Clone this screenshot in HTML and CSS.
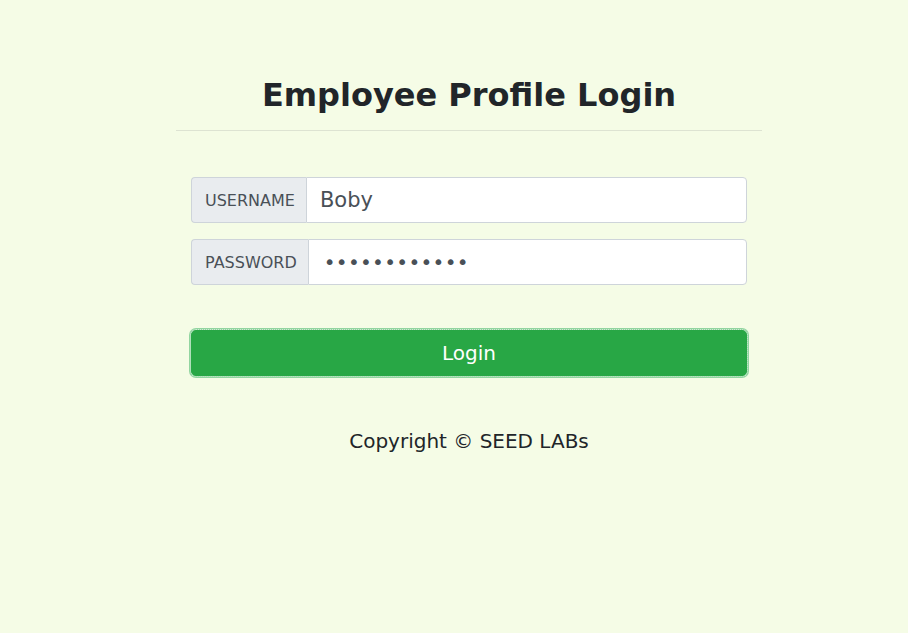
FILE: index.html
```html
<!DOCTYPE html>
<html lang="en">
<head>
<meta charset="utf-8">
<title>Employee Profile Login</title>
<link rel="stylesheet" href="styles.css">
</head>
<body>
<div class="page">
  <div class="container">
    <h2 class="title">Employee Profile Login</h2>
    <hr class="rule">
    <form class="login-form">
      <div class="input-group">
        <span class="group-label">USERNAME</span>
        <input class="group-input" type="text" value="Boby">
      </div>
      <div class="input-group">
        <span class="group-label">PASSWORD</span>
        <input class="group-input password" type="password" value="seedbobyabcd">
      </div>
      <button class="login-btn" type="button">Login</button>
    </form>
    <p class="copyright">Copyright © SEED LABs</p>
  </div>
</div>
</body>
</html>
```
FILE: styles.css
```css
html, body {
  margin: 0;
  padding: 0;
  background: #f5fce6;
  font-family: "DejaVu Sans", "Liberation Sans", sans-serif;
  color: #212529;
}
.page {
  padding-left: 30px;
  padding-top: 73px;
}
.container {
  width: 586px;
  margin: 0 auto;
}
.title {
  margin: 0;
  text-align: center;
  font-size: 32px;
  font-weight: bold;
  line-height: 44px;
  color: #212529;
}
.rule {
  margin: 13px 0 0 0;
  border: 0;
  border-top: 1px solid #dde3d2;
}
.login-form {
  padding: 46px 15px 0 15px;
  display: flex;
  flex-direction: column;
  gap: 16px;
}
.input-group {
  display: flex;
  height: 46px;
  box-sizing: border-box;
}
.group-label {
  display: flex;
  align-items: center;
  padding: 0 11px 0 13px;
  font-size: 16px;
  color: #495057;
  background: #e9ecef;
  border: 1px solid #ced4da;
  border-right: 0;
  border-radius: 4px 0 0 4px;
}
.group-input {
  flex: 1;
  min-width: 0;
  box-sizing: border-box;
  height: 46px;
  margin: 0;
  padding: 0 13px;
  font-family: "DejaVu Sans", "Liberation Sans", sans-serif;
  font-size: 21px;
  color: #495057;
  background: #fff;
  border: 1px solid #ced4da;
  border-radius: 0 4px 4px 0;
  outline: none;
}
.group-input.password {
  padding-left: 15px;
  font-size: 20px;
  letter-spacing: 0.3px;
}
.login-btn {
  margin-top: 29px;
  height: 46px;
  box-sizing: border-box;
  font-family: "DejaVu Sans", "Liberation Sans", sans-serif;
  font-size: 20px;
  color: #fff;
  background: #28a745;
  border: 1px solid #28a745;
  border-radius: 5px;
  box-shadow: 0 0 0 2px #92d5a0;
  outline: 1px dotted rgba(255, 255, 255, 0.55);
  outline-offset: 0;
  cursor: pointer;
}
.copyright {
  margin: 53px 0 0 0;
  text-align: center;
  font-size: 20px;
  color: #212529;
}
```
